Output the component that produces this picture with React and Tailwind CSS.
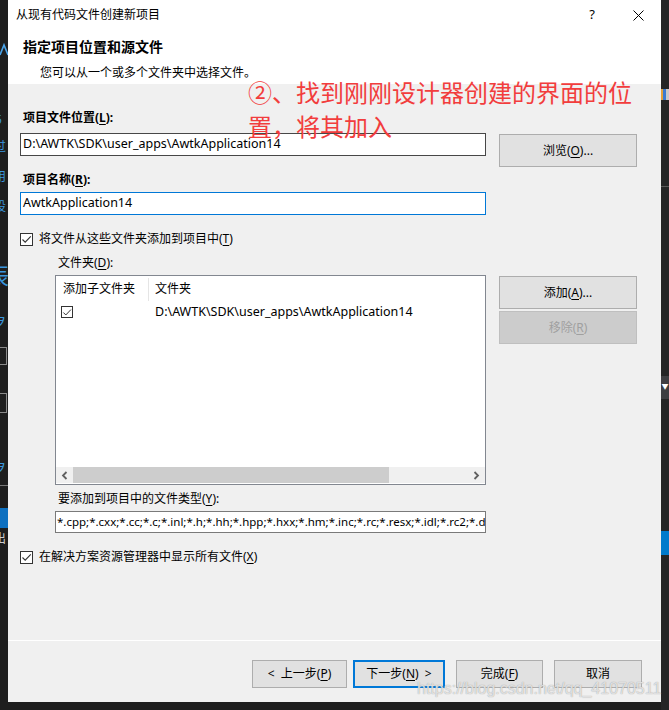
import React from "react";

const U = ({ children }) => (
  <span className="underline underline-offset-[2px] decoration-[1px]">{children}</span>
);

const Check = ({ size = 13 }) => (
  <span
    className="border border-[#333333] bg-white flex items-center justify-center shrink-0"
    style={{ width: size, height: size }}
  >
    <svg width="11" height="9" viewBox="0 0 11 9">
      <path d="M1.5 4.5 L4.2 7.2 L9.8 1.3" stroke="#333" strokeWidth="1.1" fill="none" />
    </svg>
  </span>
);

const Btn = ({ children, className = "" }) => (
  <div
    className={
      "flex items-center justify-center bg-[#e1e1e1] border border-[#adadad] text-[12px] leading-[16px] text-black " +
      className
    }
  >
    {children}
  </div>
);

const Chev = ({ dir }) => (
  <svg width="7" height="9" viewBox="0 0 7 9">
    {dir === "l" ? (
      <path d="M5.5 1 L2 4.5 L5.5 8" stroke="#606060" strokeWidth="1.8" fill="none" />
    ) : (
      <path d="M1.5 1 L5 4.5 L1.5 8" stroke="#606060" strokeWidth="1.8" fill="none" />
    )}
  </svg>
);

function LeftStrip() {
  return (
    <div className="w-[8px] h-full bg-[#1e1e1e] flex flex-col overflow-hidden shrink-0">
      <div className="h-[41px]" />
      <svg width="8" height="27" viewBox="0 0 8 27">
        <path d="M0 14 L4 4 L8 14" stroke="#4aa3e8" strokeWidth="1.6" fill="none" />
      </svg>
      <div className="h-[44px]" />
      <div className="ml-[-5px] text-[12px] leading-[16px] text-[#3a96dd]">5</div>
      <div className="h-[11px]" />
      <div className="ml-[-6px] text-[12px] leading-[16px] text-[#3a96dd]">过</div>
      <div className="h-[14px]" />
      <div className="ml-[-6px] text-[12px] leading-[16px] text-[#3a96dd]">用</div>
      <div className="h-[14px]" />
      <div className="ml-[-6px] text-[12px] leading-[16px] text-[#3a96dd]">设</div>
      <div className="h-[46px]" />
      <div className="ml-[-13px] text-[22px] leading-[28px] text-[#3a96dd]">辰</div>
      <div className="h-[24px]" />
      <div className="ml-[-7px] text-[13px] leading-[16px] text-[#3a96dd]">ヲ</div>
      <div className="h-[18px]" />
      <div className="w-[7px] h-[18px] border border-l-0 border-[#8a8a8a]" />
      <div className="h-[28px]" />
      <div className="w-[7px] h-[20px] border border-l-0 border-[#8a8a8a]" />
      <div className="h-[46px]" />
      <div className="ml-[-7px] text-[13px] leading-[16px] text-[#3a96dd]">ヲ</div>
      <div className="h-[10px]" />
      <div className="w-[8px] h-[1px] bg-[#777]" />
      <div className="h-[22px]" />
      <div className="w-[8px] h-[20px] bg-[#0e70c0]" />
      <div className="h-[4px]" />
      <div className="ml-[-6px] text-[12px] leading-[14px] text-[#cccccc]">出</div>
    </div>
  );
}

function RightStrip() {
  return (
    <div className="w-[8px] h-full bg-[#252526] flex flex-col overflow-hidden shrink-0">
      <div className="h-[89px]" />
      <div className="flex h-[11px]">
        <div className="w-[2px] bg-[#e2a23b]" />
        <div className="w-[3px] bg-[#3b7bd1]" />
        <div className="w-[3px] bg-[#c9c9c9]" />
      </div>
      <div className="h-[86px]" />
      <div className="h-[1px] bg-[#5a5a5a]" />
      <div className="h-[189px]" />
      <div className="h-[23px] bg-[#3e3e42] flex items-center justify-center text-[7px] text-white">▼</div>
      <div className="h-[132px]" />
      <div className="h-[24px] bg-[#007acc]" />
    </div>
  );
}

export default function App() {
  const path = "D:\\AWTK\\SDK\\user_apps\\AwtkApplication14";
  return (
    <div className="w-[669px] h-[710px] bg-[#1e1e1e] flex relative overflow-hidden [font-family:'Noto_Sans','Noto_Sans_CJK_SC',sans-serif]">
      <LeftStrip />
      <div className="w-[653px] h-[702px] bg-[#f0f0f0] flex flex-col shrink-0 relative">
        {/* header */}
        <div className="h-[84px] bg-white flex flex-col shrink-0">
          <div className="h-[30px] flex items-center">
            <div className="pl-[8px] text-[12px] leading-[16px] text-black flex-1">从现有代码文件创建新项目</div>
            <div className="w-[46px] h-[30px] flex items-center justify-center text-[13px] text-black">?</div>
            <div className="w-[46px] h-[30px] flex items-center justify-center">
              <svg width="11" height="11" viewBox="0 0 11 11">
                <path d="M0.5 0.5 L10.5 10.5 M10.5 0.5 L0.5 10.5" stroke="#000" strokeWidth="1" />
              </svg>
            </div>
          </div>
          <div className="mt-[7px] pl-[15px] text-[14px] leading-[20px] font-bold text-black">指定项目位置和源文件</div>
          <div className="mt-[8px] pl-[32px] text-[12px] leading-[16px] text-black">您可以从一个或多个文件夹中选择文件。</div>
        </div>

        {/* body */}
        <div className="flex flex-col pl-[12px] flex-1">
          {/* row 1 */}
          <div className="mt-[26px] flex items-start">
            <div className="w-[466px] flex flex-col">
              <div className="pl-[3px] text-[12px] leading-[16px] font-bold text-black">
                项目文件位置(<U>L</U>):
              </div>
              <div className="mt-[7px] h-[23px] bg-white border border-[#474747] flex items-center pl-[2px] text-[12.5px] text-black whitespace-nowrap overflow-hidden">
                {path}
              </div>
            </div>
            <Btn className="ml-[13px] mt-[24px] w-[138px] h-[33px]">
              浏览(<U>O</U>)...
            </Btn>
          </div>

          {/* row 2 */}
          <div className="mt-[5px] w-[466px] flex flex-col">
            <div className="pl-[3px] text-[12px] leading-[16px] font-bold text-black">
              项目名称(<U>R</U>):
            </div>
            <div className="mt-[4px] h-[23px] bg-white border border-[#0078d7] flex items-center pl-[2px] text-[12.5px] text-black">
              AwtkApplication14
            </div>
          </div>

          {/* checkbox 1 */}
          <div className="mt-[16px] h-[16px] flex items-center">
            <Check />
            <span className="ml-[6px] text-[12px] leading-[16px] text-black">
              将文件从这些文件夹添加到项目中(<U>T</U>)
            </span>
          </div>

          {/* folder label */}
          <div className="mt-[8px] pl-[38px] text-[12px] leading-[16px] text-black">
            文件夹(<U>D</U>):
          </div>

          {/* list + buttons */}
          <div className="mt-[4px] flex items-start">
            <div className="ml-[35px] w-[431px] h-[210px] bg-white border border-[#828790] flex flex-col">
              <div className="h-[26px] flex items-center text-[12px] leading-[16px] text-black">
                <div className="w-[92px] pl-[7px]">添加子文件夹</div>
                <div className="w-[1px] h-[23px] bg-[#e5e5e5]" />
                <div className="pl-[6px]">文件夹</div>
              </div>
              <div className="h-[20px] flex items-center text-[12px] leading-[16px] text-black">
                <div className="w-[93px] pl-[5px] flex items-center">
                  <Check size={12} />
                </div>
                <div className="pl-[6px] text-[12.5px]">{path}</div>
              </div>
              <div className="flex-1" />
              <div className="h-[16px] mb-[1px] flex bg-[#f0f0f0]">
                <div className="w-[17px] flex items-center justify-center">
                  <Chev dir="l" />
                </div>
                <div className="w-[316px] bg-[#cdcdcd]" />
                <div className="flex-1" />
                <div className="w-[17px] flex items-center justify-center">
                  <Chev dir="r" />
                </div>
              </div>
            </div>
            <div className="ml-[13px] mt-[1px] flex flex-col">
              <Btn className="w-[138px] h-[33px]">
                添加(<U>A</U>)...
              </Btn>
              <div className="mt-[2px] w-[138px] h-[33px] flex items-center justify-center bg-[#cccccc] border border-[#bfbfbf] text-[12px] leading-[16px] text-[#a0a0a0]">
                移除(<U>R</U>)
              </div>
            </div>
          </div>

          {/* file types */}
          <div className="mt-[6px] pl-[38px] text-[12px] leading-[16px] text-black">
            要添加到项目中的文件类型(<U>Y</U>):
          </div>
          <div className="mt-[4px] ml-[35px] w-[431px] h-[22px] bg-white border border-[#7a7a7a] flex items-center pl-[1px] text-[11.5px] text-black whitespace-nowrap overflow-hidden">
            *.cpp;*.cxx;*.cc;*.c;*.inl;*.h;*.hh;*.hpp;*.hxx;*.hm;*.inc;*.rc;*.resx;*.idl;*.rc2;*.def;*.odl;*.asm;*.asmx;*.xsd;*.bin;*.rgs;*.html;*.htm
          </div>

          {/* checkbox 2 */}
          <div className="mt-[16px] h-[16px] flex items-center">
            <Check />
            <span className="ml-[6px] text-[12px] leading-[16px] text-black">
              在解决方案资源管理器中显示所有文件(<U>X</U>)
            </span>
          </div>
          <div className="flex-1" />
        </div>

        {/* footer */}
        <div className="h-[1px] bg-white shrink-0" />
        <div className="h-[61px] shrink-0 flex items-start justify-end pr-[19px] pt-[19px]">
          <Btn className="w-[95px] h-[28px]">
            &lt;&nbsp;&nbsp;上一步(<U>P</U>)
          </Btn>
          <div className="ml-[6px] w-[92px] h-[28px] flex items-center justify-center bg-[#e1e1e1] border-2 border-[#0078d7] text-[12px] leading-[16px] text-black">
            下一步(<U>N</U>)&nbsp;&nbsp;&gt;
          </div>
          <Btn className="ml-[11px] w-[87px] h-[28px]">
            完成(<U>F</U>)
          </Btn>
          <Btn className="ml-[11px] w-[88px] h-[28px]">取消</Btn>
        </div>

        {/* annotation */}
        <div className="absolute left-[240px] top-[75px] text-[24px] leading-[34px] text-[#f23d3d] [font-family:'Noto_Sans_CJK_SC',sans-serif] whitespace-nowrap">
          <div>②、找到刚刚设计器创建的界面的位</div>
          <div>置，将其加入</div>
        </div>
      </div>
      <RightStrip />

      {/* watermark */}
      <div className="absolute left-[417px] top-[679px] text-[16px] leading-[20px] text-white/70 [font-family:'Liberation_Sans',Arial,sans-serif] [text-shadow:0_0_1px_#8a8a8a] whitespace-nowrap">
        https://blog.csdn.net/qq_41070511
      </div>
    </div>
  );
}
